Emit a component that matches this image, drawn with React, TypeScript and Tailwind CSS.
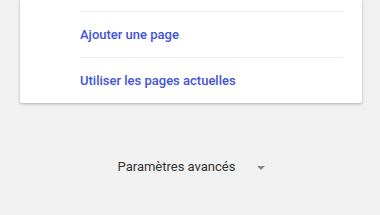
import React from 'react';

function Row({ label }: { label: string }) {
  return (
    <div className="h-[46px] border-t border-[#ebebeb] flex items-center">
      <a className="text-[13px] font-medium text-[#3f53d8] cursor-pointer">{label}</a>
    </div>
  );
}

export default function App() {
  return (
    <div className="w-[380px] h-[215px] bg-[#f1f1f1] overflow-hidden" style={{ fontFamily: 'Roboto, "Noto Sans", sans-serif' }}>
      <div className="ml-[20px] w-[342px] bg-white rounded-b-[2px] shadow-[0_1px_3px_rgba(0,0,0,0.28)] pl-[60px] pr-[19px]">
        <div className="h-[11px]" />
        <Row label="Ajouter une page" />
        <Row label="Utiliser les pages actuelles" />
      </div>
      <div className="mt-[54px] flex items-center justify-center gap-[22px] pl-[3px]">
        <span className="text-[13px] text-[#333333]">Paramètres avancés</span>
        <svg width="8" height="4" viewBox="0 0 8 4" className="mt-[2px]">
          <path d="M0 0 L8 0 L4 4 Z" fill="#888888" />
        </svg>
      </div>
    </div>
  );
}
